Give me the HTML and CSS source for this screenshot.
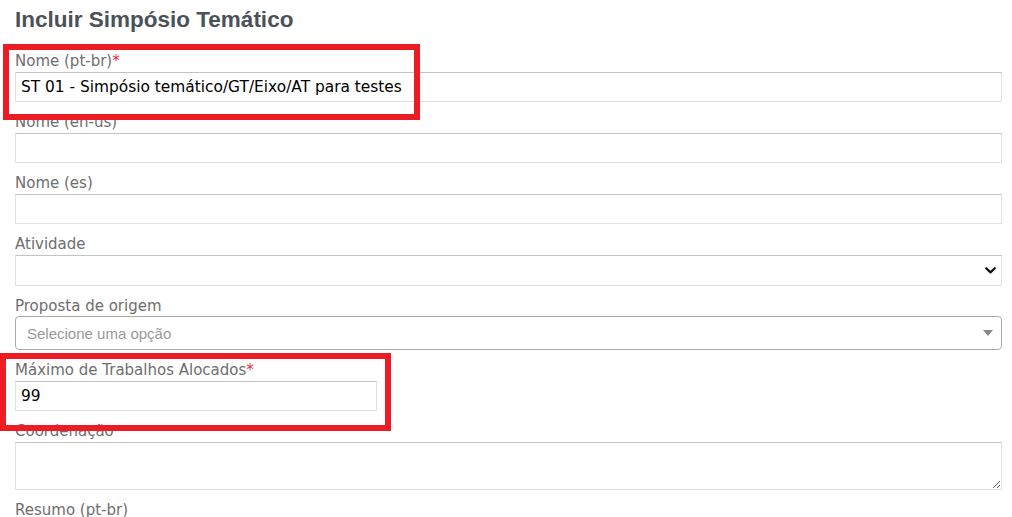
FILE: index.html
```html
<!DOCTYPE html>
<html lang="pt-br">
<head>
<meta charset="utf-8">
<title>Incluir Simpósio Temático</title>
<link rel="stylesheet" href="styles.css">
</head>
<body>
<main class="page">
  <h1 class="title">Incluir Simpósio Temático</h1>
  <form class="form">
    <div class="group">
      <label class="label">Nome (pt-br)<span class="req">*</span></label>
      <input class="control" type="text" value="ST 01 - Simpósio temático/GT/Eixo/AT para testes">
    </div>
    <div class="group">
      <label class="label">Nome (en-us)</label>
      <input class="control" type="text">
    </div>
    <div class="group">
      <label class="label">Nome (es)</label>
      <input class="control" type="text">
    </div>
    <div class="group">
      <label class="label">Atividade</label>
      <div class="control select">
        <svg class="chevron" width="11" height="7" viewBox="0 0 11 7"><path d="M1.2 1.2 L5.5 5.4 L9.8 1.2" fill="none" stroke="#111" stroke-width="2.2" stroke-linecap="round" stroke-linejoin="round"/></svg>
      </div>
    </div>
    <div class="group tight">
      <label class="label">Proposta de origem</label>
      <div class="select2">
        <span class="placeholder">Selecione uma opção</span>
        <svg class="caret" width="10" height="6" viewBox="0 0 10 6"><path d="M0 0 H10 L5 6 Z" fill="#888"/></svg>
      </div>
    </div>
    <div class="group">
      <label class="label">Máximo de Trabalhos Alocados<span class="req">*</span></label>
      <input class="control short" type="text" value="99">
    </div>
    <div class="group">
      <label class="label">Coordenação</label>
      <textarea class="control area"></textarea>
    </div>
    <div class="group">
      <label class="label">Resumo (pt-br)</label>
      <textarea class="control area"></textarea>
    </div>
  </form>
</main>
<div class="mark mark-1"></div>
<div class="mark mark-2"></div>
</body>
</html>
```
FILE: styles.css
```css
html, body {
  margin: 0;
  padding: 0;
  background: #fff;
}
body {
  position: relative;
  font-family: "DejaVu Sans", Verdana, sans-serif;
}
.page {
  padding: 7px 10px 20px 15px;
}
.title {
  margin: 0 0 18px 0;
  font-family: "Liberation Sans", Arial, sans-serif;
  font-weight: bold;
  font-size: 22.5px;
  line-height: 26px;
  color: #4b5157;
}
.form {
  display: flex;
  flex-direction: column;
  gap: 10px;
}
.group {
  display: flex;
  flex-direction: column;
  gap: 1px;
}
.group.tight {
  gap: 0;
}
.label {
  font-size: 15px;
  line-height: 20px;
  color: #6e6e6e;
}
.req {
  color: #e8303c;
}
.control {
  box-sizing: border-box;
  display: block;
  width: 100%;
  height: 30px;
  margin: 0;
  padding: 0 5px;
  border: 1px solid #e2e2e2;
  border-top-color: #c3c3c3;
  border-radius: 0;
  background: #fff;
  font-family: "DejaVu Sans", Verdana, sans-serif;
  font-size: 15.4px;
  color: #000;
  outline: none;
}
.short {
  width: 362px;
}
.select {
  height: 31px;
  display: flex;
  align-items: center;
  justify-content: flex-end;
  padding-right: 5px;
}
.chevron {
  display: block;
}
.select2 {
  box-sizing: border-box;
  height: 34px;
  border: 1px solid #aaa;
  border-radius: 4px;
  display: flex;
  align-items: center;
  justify-content: space-between;
  padding: 0 8px 0 11px;
}
.placeholder {
  font-family: "Liberation Sans", Arial, sans-serif;
  font-size: 15px;
  color: #999;
}
.caret {
  display: block;
}
.area {
  height: 48px;
  resize: vertical;
  padding: 4px 5px;
}
.mark {
  position: absolute;
  box-sizing: border-box;
  border: 6px solid #ed1c24;
  pointer-events: none;
}
.mark-1 {
  left: 3px;
  top: 44px;
  width: 417px;
  height: 76px;
}
.mark-2 {
  left: 0;
  top: 353px;
  width: 391px;
  height: 78px;
}
```
